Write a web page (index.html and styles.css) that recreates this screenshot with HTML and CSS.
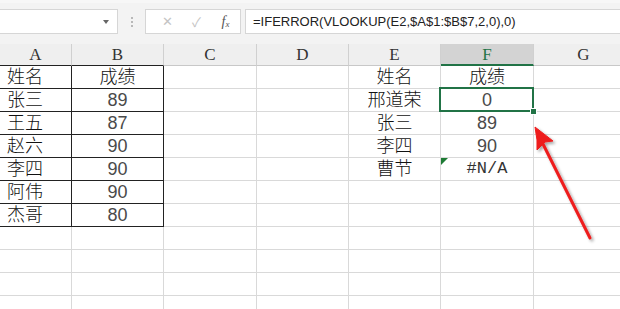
FILE: index.html
```html
<!DOCTYPE html>
<html lang="zh-CN">
<head>
    <meta charset="UTF-8">
    <title>IFERROR VLOOKUP</title>
    <link rel="stylesheet" href="styles.css">
</head>
<body>
    <div class="toolbar">
        <div class="namebox"><span class="caret"></span></div>
        <div class="grip"><i></i><i></i><i></i></div>
        <div class="fxbox">
            <span class="btn cancel">&#x2715;</span>
            <span class="btn ok">&#x2713;</span>
            <span class="btn fx">f<sub>x</sub></span>
        </div>
        <div class="formula">=IFERROR(VLOOKUP(E2,$A$1:$B$7,2,0),0)</div>
    </div>

    <div class="sheet">
        <!-- 列标 -->
        <div class="hd bk">A</div><div class="hd bk">B</div><div class="hd">C</div><div class="hd">D</div><div class="hd">E</div><div class="hd on">F</div><div class="hd">G</div>

        <div class="c bk l">姓名</div><div class="c bk">成绩</div><div class="c"></div><div class="c"></div><div class="c">姓名</div><div class="c">成绩</div><div class="c"></div>
        <div class="c bk l">张三</div><div class="c bk num">89</div><div class="c"></div><div class="c"></div><div class="c">邢道荣</div><div class="c num sel">0</div><div class="c"></div>
        <div class="c bk l">王五</div><div class="c bk num">87</div><div class="c"></div><div class="c"></div><div class="c">张三</div><div class="c num">89</div><div class="c"></div>
        <div class="c bk l">赵六</div><div class="c bk num">90</div><div class="c"></div><div class="c"></div><div class="c">李四</div><div class="c num">90</div><div class="c"></div>
        <div class="c bk l">李四</div><div class="c bk num">90</div><div class="c"></div><div class="c"></div><div class="c">曹节</div><div class="c err">#N/A</div><div class="c"></div>
        <div class="c bk l">阿伟</div><div class="c bk num">90</div><div class="c"></div><div class="c"></div><div class="c"></div><div class="c"></div><div class="c"></div>
        <div class="c bk l">杰哥</div><div class="c bk num">80</div><div class="c"></div><div class="c"></div><div class="c"></div><div class="c"></div><div class="c"></div>
        <div class="c"></div><div class="c"></div><div class="c"></div><div class="c"></div><div class="c"></div><div class="c"></div><div class="c"></div>
        <div class="c"></div><div class="c"></div><div class="c"></div><div class="c"></div><div class="c"></div><div class="c"></div><div class="c"></div>
        <div class="c"></div><div class="c"></div><div class="c"></div><div class="c"></div><div class="c"></div><div class="c"></div><div class="c"></div>
        <div class="c"></div><div class="c"></div><div class="c"></div><div class="c"></div><div class="c"></div><div class="c"></div><div class="c"></div>
    </div>

    <!-- 红色箭头标注 -->
    <svg class="arrow" width="620" height="309" viewBox="0 0 620 309">
        <defs>
            <filter id="sh" x="-50%" y="-50%" width="200%" height="200%">
                <feDropShadow dx="2" dy="2" stdDeviation="1.5" flood-color="#000" flood-opacity=".35"/>
            </filter>
        </defs>
        <g filter="url(#sh)" fill="#ee1c1c" stroke="#ee1c1c">
            <line x1="590" y1="238" x2="543" y2="144" stroke-width="3" stroke-linecap="round"/>
            <polygon points="535,127 553,141 545,142 537,150 537,140" stroke-width="1" stroke-linejoin="round"/>
        </g>
    </svg>
</body>
</html>
```

FILE: styles.css
```css
html,body{ margin:0; padding:0; }
body{
    width:620px;
    height:309px;
    overflow:hidden;
    position:relative;
    background:#fff;
    font-family:"Liberation Sans","Noto Sans CJK SC",sans-serif;
}

/* 编辑栏 */
.toolbar{
    height:44px;
    box-sizing:border-box;
    padding-top:9px;
    background:#f3f3f3;
    border-top:3px solid #f7f7f7;
    display:flex;
    align-items:flex-start;
}
.namebox{
    width:119px;
    height:25px;
    margin-left:-1px;
    margin-top:-3px;
    box-sizing:border-box;
    background:#fff;
    border:1px solid #d6d6d6;
    position:relative;
}
.namebox .caret{
    position:absolute;
    right:8px;
    top:10px;
    border-left:3px solid transparent;
    border-right:3px solid transparent;
    border-top:4px solid #666;
}
.grip{
    width:27px;
    margin-top:5px;
    display:flex;
    flex-direction:column;
    align-items:center;
    gap:2px;
}
.grip i{ width:2px; height:2px; background:#b8b8b8; display:block; }
.fxbox{
    width:96px;
    height:25px;
    margin-top:-3px;
    box-sizing:border-box;
    background:#fff;
    border:1px solid #d6d6d6;
    display:flex;
    align-items:center;
    padding-left:7px;
}
.fxbox .btn{
    width:31px;
    text-align:center;
    color:#c4c4c4;
    font-size:13px;
}
.fxbox .fx{
    font-family:"Liberation Serif",serif;
    font-style:italic;
    color:#555;
    font-size:14px;
}
.fxbox .fx sub{ font-size:9px; vertical-align:-1px; }
.formula{
    flex:1;
    height:25px;
    margin-left:4px;
    margin-top:-3px;
    margin-right:-2px;
    box-sizing:border-box;
    background:#fff;
    border:1px solid #d6d6d6;
    padding-left:7px;
    font-size:13px;
    line-height:23px;
    color:#222;
}

/* 表格区 */
.sheet{
    display:grid;
    grid-template-columns:72px 92px 93px 92px 92px 93px 100px;
    grid-template-rows:22px;
    grid-auto-rows:23px;
}
.hd{
    background:#efefef;
    border-right:1px solid #d0d0d0;
    border-bottom:1px solid #c8c8c8;
    box-sizing:border-box;
    text-align:center;
    font-family:"Liberation Serif",serif;
    font-size:17px;
    line-height:22px;
    color:#333;
}
.hd.bk{ border-bottom-color:#222; }
.hd.on{
    background:#d3d3d3;
    color:#217346;
    border-bottom:2px solid #217346;
}
.c{
    border-right:1px solid #d9d9d9;
    border-bottom:1px solid #d9d9d9;
    box-sizing:border-box;
    text-align:center;
    font-size:18px;
    font-weight:300;
    line-height:22px;
    color:#111;
    white-space:nowrap;
    position:relative;
}
.c.bk{ border-right-color:#222; border-bottom-color:#222; }
.c.l{ text-align:left; padding-left:7px; }
.c.num{ color:#4a4a4a; font-weight:400; }
.c.err{
    font-family:"Liberation Mono",monospace;
    font-size:17px;
    color:#333;
}
.c.err::before{
    content:"";
    position:absolute;
    left:0;
    top:0;
    border-top:7px solid #1e7b34;
    border-right:7px solid transparent;
}
.c.sel::after{
    content:"";
    position:absolute;
    left:-2px;
    top:-2px;
    right:-1px;
    bottom:-1px;
    border:2px solid #217346;
}
.c.sel::before{
    content:"";
    position:absolute;
    right:-4px;
    bottom:-4px;
    width:5px;
    height:5px;
    background:#217346;
    border:1px solid #fff;
    z-index:2;
}

.arrow{ position:absolute; left:0; top:0; pointer-events:none; }
```
